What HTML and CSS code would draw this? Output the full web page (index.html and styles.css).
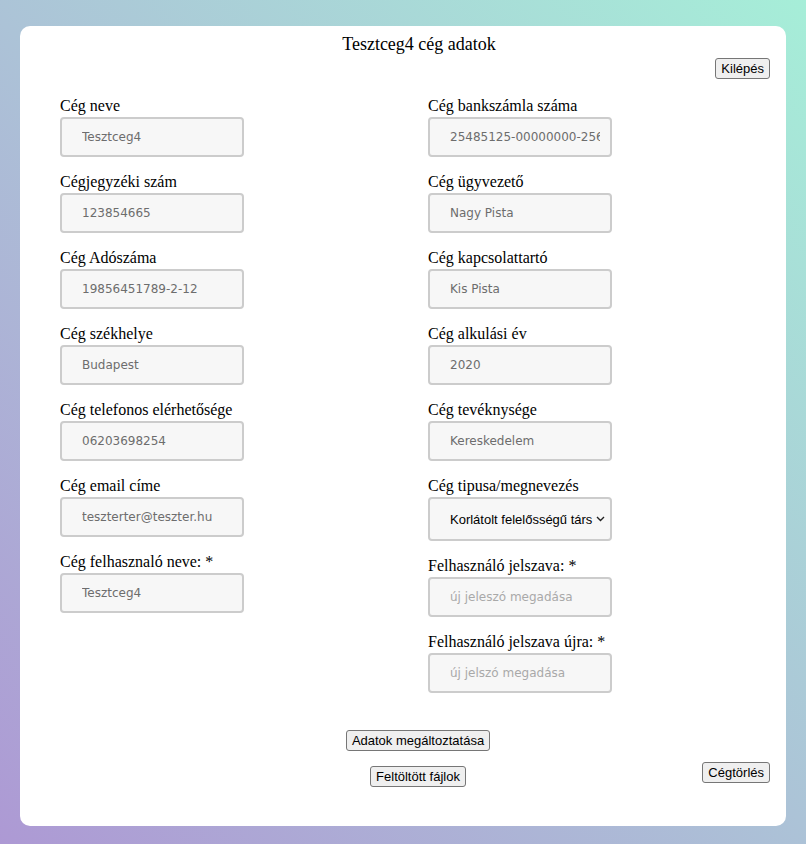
FILE: index.html
```html
<!DOCTYPE html>
<html lang="hu">
<head>
<meta charset="utf-8">
<title>Tesztceg4 cég adatok</title>
<link rel="stylesheet" href="styles.css">
</head>
<body>
<main class="card">
  <h1 class="title">Tesztceg4 cég adatok</h1>
  <div class="topbar"><button class="btn">Kilépés</button></div>
  <form class="form">
    <div class="col">
      <div class="field"><label>Cég neve</label><input class="inp" value="Tesztceg4"></div>
      <div class="field"><label>Cégjegyzéki szám</label><input class="inp" value="123854665"></div>
      <div class="field"><label>Cég Adószáma</label><input class="inp" value="19856451789-2-12"></div>
      <div class="field"><label>Cég székhelye</label><input class="inp" value="Budapest"></div>
      <div class="field"><label>Cég telefonos elérhetősége</label><input class="inp" value="06203698254"></div>
      <div class="field"><label>Cég email címe</label><input class="inp" value="teszterter@teszter.hu"></div>
      <div class="field"><label>Cég felhasznaló neve: *</label><input class="inp" value="Tesztceg4"></div>
    </div>
    <div class="col">
      <div class="field"><label>Cég bankszámla száma</label><input class="inp" value="25485125-00000000-25656565"></div>
      <div class="field"><label>Cég ügyvezető</label><input class="inp" value="Nagy Pista"></div>
      <div class="field"><label>Cég kapcsolattartó</label><input class="inp" value="Kis Pista"></div>
      <div class="field"><label>Cég alkulási év</label><input class="inp" value="2020"></div>
      <div class="field"><label>Cég tevéknysége</label><input class="inp" value="Kereskedelem"></div>
      <div class="field"><label>Cég tipusa/megnevezés</label>
        <div class="sel"><span class="sel-text">Korlátolt felelősségű társ</span>
          <svg class="chev" width="9" height="6" viewBox="0 0 9 6"><path d="M1 1l3.5 3.5L8 1" fill="none" stroke="#222" stroke-width="1.4"/></svg>
        </div>
      </div>
      <div class="field"><label>Felhasználó jelszava: *</label><input class="inp" placeholder="új jeleszó megadása"></div>
      <div class="field"><label>Felhasználó jelszava újra: *</label><input class="inp" placeholder="új jelszó megadása"></div>
    </div>
  </form>
  <div class="row1"><button class="btn">Adatok megáltoztatása</button></div>
  <div class="row2">
    <span></span>
    <button class="btn files">Feltöltött fájlok</button>
    <button class="btn del">Cégtörlés</button>
  </div>
</main>
</body>
</html>
```
FILE: styles.css
```css
* { box-sizing: border-box; }
html, body { height: 100%; }
body {
  margin: 0;
  padding: 26px 20px 18px 20px;
  background: linear-gradient(45deg, #ad99d4 0%, #acc3d7 50%, #a6eed8 100%);
  font-family: "Liberation Serif", "Times New Roman", serif;
}
.card {
  background: #fff;
  border-radius: 10px;
  height: 800px;
  padding: 7px 16px 0 0;
}
.title {
  margin: 0;
  font-size: 18px;
  font-weight: normal;
  line-height: 22px;
  text-align: center;
  padding-left: 48px;
}
.topbar {
  display: flex;
  justify-content: flex-end;
  margin-top: 3px;
}
.btn {
  font-family: "Liberation Sans", Arial, sans-serif;
  font-size: 13px;
  line-height: 15px;
  height: 21px;
  padding: 1px 5px;
  color: #000;
  background: #efefef;
  border: 1px solid #767676;
  border-radius: 3px;
}
.form {
  display: grid;
  grid-template-columns: 368px 1fr;
  padding-left: 40px;
  margin-top: 17px;
}
.field { margin-bottom: 15px; }
.field label {
  display: block;
  font-size: 16px;
  line-height: 19px;
  margin-bottom: 2px;
}
.inp, .sel {
  display: block;
  width: 184px;
  height: 40px;
  border: 2px solid #cccccc;
  border-radius: 4px;
  background: #f7f7f7;
  padding: 0 10px 0 20px;
  font-family: "DejaVu Sans", Verdana, sans-serif;
  font-size: 12px;
  color: #6d6d6d;
  outline: none;
}
.inp::placeholder { color: #a9a9a9; }
.sel {
  height: 44px;
  display: flex;
  align-items: center;
  padding: 0 5px 0 20px;
  color: #000;
  overflow: hidden;
}
.sel-text {
  flex: 1;
  white-space: nowrap;
  font-family: "Liberation Sans", Arial, sans-serif;
  font-size: 13px;
}
.chev { flex: none; margin-left: 3px; }
.row1 {
  display: flex;
  justify-content: center;
  padding-left: 46px;
  margin-top: 22px;
}
.row2 {
  display: grid;
  grid-template-columns: 1fr auto 1fr;
  padding-left: 46px;
  margin-top: 11px;
}
.files { margin-top: 4px; }
.del { justify-self: end; align-self: start; }
```
